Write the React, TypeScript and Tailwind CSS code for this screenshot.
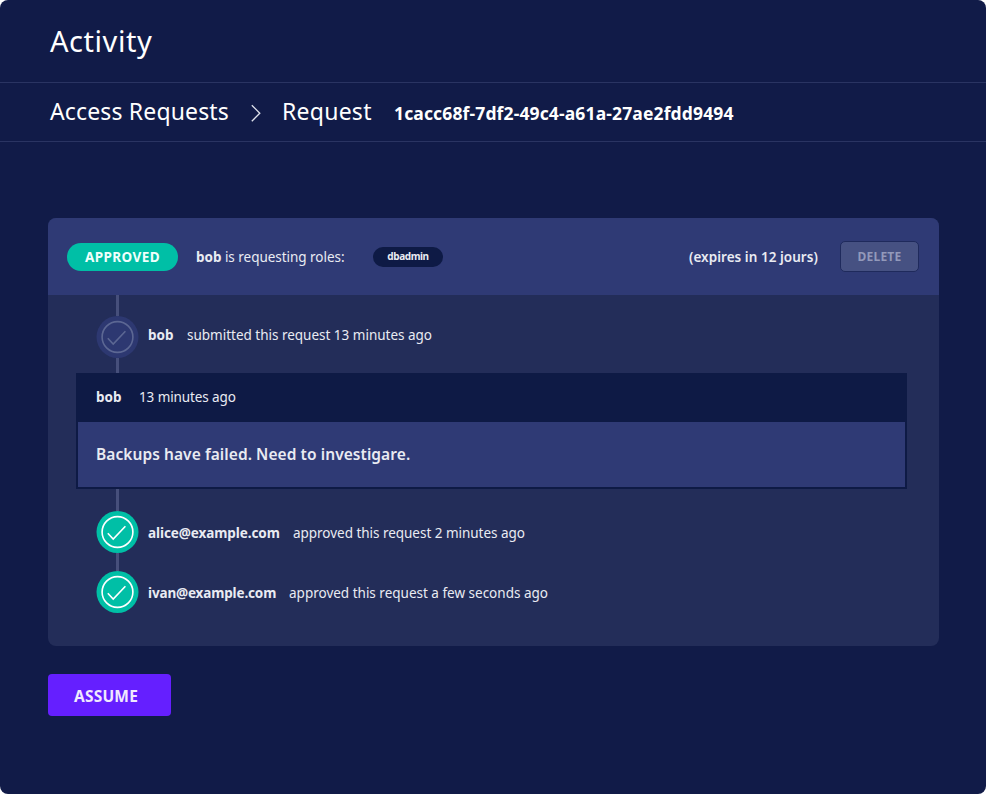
import React from "react";

function CheckNode({ muted = false }: { muted?: boolean }) {
  const stroke = muted ? "#5c6793" : "#ffffff";
  return (
    <svg width="43" height="42" viewBox="0 0 43 42" fill="none" className="block shrink-0">
      <circle cx="21.5" cy="21" r="21" fill={muted ? "#2d3871" : "#00bfa6"} />
      <circle cx="21.5" cy="21" r="15.4" stroke={stroke} strokeWidth="1.6" />
      <path d="M11.8 22.3 17.2 28 29.4 15.3" stroke={stroke} strokeWidth="1.6" />
    </svg>
  );
}

function Line({ className }: { className: string }) {
  return <div className={`w-[3px] bg-[#464f7b] ${className}`} />;
}

export default function App() {
  return (
    <div className="bg-white">
      <main className="h-[794px] w-[986px] overflow-hidden whitespace-nowrap rounded-lg bg-[#111b48] font-['Noto_Sans',sans-serif] text-[#e9ebf2]">
        <header className="flex h-[83px] items-center border-b border-[#2a3462] pl-[50px] text-white">
          <h1 className="text-[29px] leading-[40px] tracking-[0.55px]">Activity</h1>
        </header>
        <nav className="flex h-[59px] items-center border-b border-[#2a3462] pl-[50px] text-white">
          <span className="mb-0.5 w-[200px] text-[23px] leading-8 tracking-[0.15px]">Access Requests</span>
          <svg width="12" height="18" viewBox="0 0 12 18" fill="none" className="mt-0.5 shrink-0">
            <path d="M1.8 1.2 9.8 9.2 1.8 17.2" stroke="#dfe2ec" strokeWidth="1.3" />
          </svg>
          <span className="mb-0.5 ml-5 w-[112px] text-[23px] leading-8 tracking-[0.25px]">Request</span>
          <span className="mt-px text-[17.5px] font-bold leading-8 tracking-[0.14px]">1cacc68f-7df2-49c4-a61a-27ae2fdd9494</span>
        </nav>

        <section className="ml-12 mt-[76px] h-[428px] w-[891px] overflow-hidden rounded-lg bg-[#232d59]">
          <div className="flex h-[77px] items-center bg-[#2f3a75] pl-[19px]">
            <div className="flex h-7 w-[111px] items-center justify-center rounded-full bg-[#00bfa6] pt-px text-[13.5px] font-bold tracking-[0.4px] text-[#f0fffc]">APPROVED</div>
            <p className="ml-[18px] mt-0.5 w-[177px] text-[13.5px] tracking-[-0.03px]"><b>bob</b> is requesting roles:</p>
            <span className="flex h-5 w-[70px] items-center justify-center rounded-full bg-[#0e1a45] text-[10px] font-bold tracking-[-0.4px]">dbadmin</span>
            <span className="ml-[246px] mt-0.5 w-[151px] text-[13.5px] font-semibold tracking-[0.04px]">(expires in 12 jours)</span>
            <button className="h-[31px] w-[79px] rounded-[5px] border border-[#1f2a5c] bg-[#465182] text-[12px] font-bold tracking-[0.2px] text-[#9299ba]">DELETE</button>
          </div>

          <div className="flex h-[78px] pl-12">
            <div className="flex w-[43px] flex-col items-center">
              <Line className="h-[21px]" />
              <CheckNode muted />
              <Line className="flex-1" />
            </div>
            <p className="ml-[9px] flex pt-[30px] text-[13.5px] leading-5">
              <b className="w-[39px]">bob</b>
              <span className="tracking-[-0.01px]">submitted this request 13 minutes ago</span>
            </p>
          </div>

          <div className="ml-7 h-[116px] w-[831px] border-2 border-[#0e1a45] bg-[#2f3a75]">
            <div className="flex h-[47px] items-center bg-[#0e1a45] pb-0.5 pl-[18px] text-[13.5px]">
              <b className="w-[43px]">bob</b>
              <span className="tracking-[-0.1px]">13 minutes ago</span>
            </div>
            <p className="pl-[18px] text-[15.5px] font-semibold leading-[65px] tracking-[0.07px]">Backups have failed. Need to investigare.</p>
          </div>

          <div className="flex pl-12">
            <div className="flex w-[43px] flex-col items-center">
              <Line className="h-[22px]" />
              <CheckNode />
              <Line className="h-[18px]" />
              <CheckNode />
            </div>
            <div className="ml-[9px] text-[13.5px] leading-5">
              <p className="flex h-[60px] pt-[34px]">
                <b className="w-[145px] tracking-[-0.08px]">alice@example.com</b>
                <span className="tracking-[-0.03px]">approved this request 2 minutes ago</span>
              </p>
              <p className="flex h-[60px] pt-[34px]">
                <b className="w-[141px] tracking-[-0.15px]">ivan@example.com</b>
                <span>approved this request a few seconds ago</span>
              </p>
            </div>
          </div>
        </section>

        <button className="ml-12 mt-7 flex h-[42px] w-[123px] items-center rounded bg-[#651fff] pl-[26px] pt-[3px] text-[15.5px] font-bold tracking-[0.2px] text-[#f0e9ff]">ASSUME</button>
      </main>
    </div>
  );
}
